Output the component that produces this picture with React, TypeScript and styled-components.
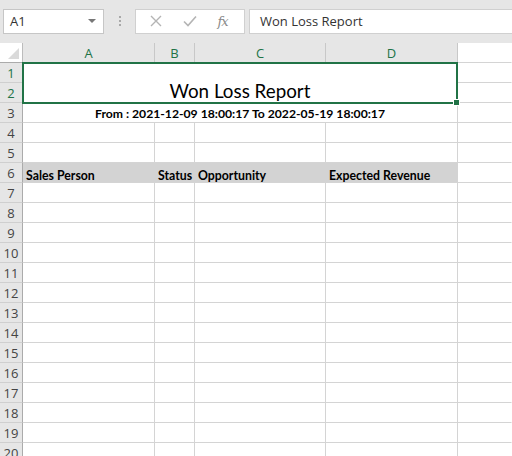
import React from "react";
import styled, { createGlobalStyle } from "styled-components";

const Global = createGlobalStyle`
  html, body { margin: 0; padding: 0; background: #fff; }
  body { width: 512px; height: 456px; overflow: hidden; font-family: "Open Sans", "Noto Sans", sans-serif; }
`;

const Page = styled.div`
  width: 512px;
  height: 456px;
  display: flex;
  flex-direction: column;
  overflow: hidden;
  position: relative;
`;

const Toolbar = styled.div`
  flex-shrink: 0;
  height: 43px;
  box-sizing: border-box;
  background: #e6e6e6;
  display: flex;
  align-items: center;
  padding: 0 0 1px 3px;
`;

const NameBox = styled.div`
  width: 101px;
  height: 25px;
  box-sizing: border-box;
  background: #fff;
  border: 1px solid #c6c6c6;
  display: flex;
  align-items: center;
  justify-content: space-between;
  padding: 0 7px 0 6px;
  font-size: 13px;
  color: #333;
`;

const Caret = styled.span`
  width: 0;
  height: 0;
  border-left: 4px solid transparent;
  border-right: 4px solid transparent;
  border-top: 4px solid #777;
`;

const Grip = styled.div`
  width: 31px;
  display: flex;
  flex-direction: column;
  align-items: center;
  gap: 2px;
  span {
    width: 2px;
    height: 2px;
    background: #a8a8a8;
  }
`;

const FxButtons = styled.div`
  width: 110px;
  height: 25px;
  box-sizing: border-box;
  background: #fff;
  border: 1px solid #d0d0d0;
  display: flex;
  align-items: center;
  justify-content: space-around;
  padding: 0 6px 0 4px;
  color: #b4b4b4;
`;

const Fx = styled.span`
  font-family: "DejaVu Serif", "Liberation Serif", serif;
  font-style: italic;
  font-size: 13px;
  color: #8a8a8a;
  letter-spacing: -1px;
`;

const FormulaInput = styled.div`
  margin-left: 4px;
  flex: 1;
  height: 25px;
  box-sizing: border-box;
  background: #fff;
  border: 1px solid #d0d0d0;
  border-right: none;
  display: flex;
  align-items: center;
  padding-left: 10px;
  font-size: 13px;
  color: #333;
`;

const Sheet = styled.div`
  flex-shrink: 0;
  display: grid;
  grid-template-columns: 23px 132px 40px 131px 132px 1fr;
  grid-auto-rows: 20px;
  position: relative;
`;

const Corner = styled.div`
  background: #fff;
  border-right: 1px solid #bcbcbc;
  border-bottom: 1px solid #ababab;
  box-sizing: border-box;
  position: relative;
  &::after {
    content: "";
    position: absolute;
    right: 3px;
    bottom: 3px;
    width: 0;
    height: 0;
    border-left: 11px solid transparent;
    border-bottom: 11px solid #dadada;
  }
`;

const ColHead = styled.div<{ $selected?: boolean; $blank?: boolean }>`
  box-sizing: border-box;
  background: ${(p) => (p.$blank ? "#fff" : "#e6e6e6")};
  border-right: 1px solid ${(p) => (p.$blank ? "transparent" : "#c8c8c8")};
  border-bottom: 1px solid ${(p) => (p.$blank ? "#d4d4d4" : "#ababab")};
  display: flex;
  align-items: center;
  justify-content: center;
  font-size: 13px;
  color: ${(p) => (p.$selected ? "#217346" : "#444")};
`;

const RowHead = styled.div<{ $selected?: boolean }>`
  grid-column: 1;
  box-sizing: border-box;
  background: #e6e6e6;
  border-right: 1px solid #ababab;
  border-bottom: 1px solid #cfcfcf;
  display: flex;
  align-items: center;
  justify-content: center;
  font-size: 13px;
  color: ${(p) => (p.$selected ? "#217346" : "#444")};
  padding-top: 1px;
`;

const Cell = styled.div<{ $span?: number; $rows?: number; $edge?: boolean }>`
  box-sizing: border-box;
  ${(p) => (p.$span ? `grid-column: span ${p.$span};` : "")}
  ${(p) => (p.$rows ? `grid-row: span ${p.$rows};` : "")}
  border-right: 1px solid ${(p) => (p.$edge ? "transparent" : "#d4d4d4")};
  border-bottom: 1px solid #d4d4d4;
  background: #fff;
  font-family: Lato, "Open Sans", sans-serif;
  font-size: 11px;
  color: #000;
  display: flex;
  align-items: flex-end;
  padding: 0 3px 3px;
  white-space: nowrap;
  overflow: hidden;
`;

const Title = styled(Cell)`
  justify-content: center;
  font-size: 18.8px;
  line-height: 1;
  padding-bottom: 1px;
`;

const Range = styled(Cell)`
  justify-content: center;
  font-weight: bold;
  font-size: 12.2px;
  padding-bottom: 1px;
`;

const HeadCell = styled(Cell)`
  font-weight: bold;
  font-size: 12.3px;
  line-height: 1;
  background: #d3d3d3;
  border-right-color: #d3d3d3;
  padding-bottom: 0;
`;

const Selection = styled.div`
  position: absolute;
  left: 22px;
  top: 19px;
  width: 436px;
  height: 42px;
  box-sizing: border-box;
  border: 2px solid #217346;
  pointer-events: none;
`;

const Handle = styled.div`
  position: absolute;
  right: -4px;
  bottom: -4px;
  width: 5px;
  height: 5px;
  background: #217346;
  border: 1px solid #fff;
`;

const cols = ["A", "B", "C", "D"];

export default function App() {
  const emptyRows = Array.from({ length: 14 }, (_, i) => i + 7);
  return (
    <Page>
      <Global />
      <Toolbar>
        <NameBox>
          A1
          <Caret />
        </NameBox>
        <Grip>
          <span />
          <span />
          <span />
        </Grip>
        <FxButtons>
          <svg width="12" height="12" viewBox="0 0 12 12">
            <path d="M1 1 L11 11 M11 1 L1 11" stroke="#b4b4b4" strokeWidth="1.4" fill="none" />
          </svg>
          <svg width="14" height="12" viewBox="0 0 14 12">
            <path d="M1 6.5 L5 10.5 L13 1.5" stroke="#b4b4b4" strokeWidth="1.6" fill="none" />
          </svg>
          <Fx>fx</Fx>
        </FxButtons>
        <FormulaInput>Won Loss Report</FormulaInput>
      </Toolbar>
      <Sheet>
        <Corner />
        {cols.map((c) => (
          <ColHead key={c} $selected>
            {c}
          </ColHead>
        ))}
        <ColHead $blank />

        <RowHead $selected>1</RowHead>
        <Title $span={4} $rows={2}>Won Loss Report</Title>
        <Cell $edge />
        <RowHead $selected>2</RowHead>
        <Cell $edge />

        <RowHead>3</RowHead>
        <Range $span={4}>From : 2021-12-09 18:00:17 To 2022-05-19 18:00:17</Range>
        <Cell $edge />

        {[4, 5].map((r) => (
          <React.Fragment key={r}>
            <RowHead>{r}</RowHead>
            <Cell />
            <Cell />
            <Cell />
            <Cell />
            <Cell $edge />
          </React.Fragment>
        ))}

        <RowHead>6</RowHead>
        <HeadCell>Sales Person</HeadCell>
        <HeadCell>Status</HeadCell>
        <HeadCell>Opportunity</HeadCell>
        <HeadCell>Expected Revenue</HeadCell>
        <Cell $edge />

        {emptyRows.map((r) => (
          <React.Fragment key={r}>
            <RowHead>{r}</RowHead>
            <Cell />
            <Cell />
            <Cell />
            <Cell />
            <Cell $edge />
          </React.Fragment>
        ))}
        <Selection>
          <Handle />
        </Selection>
      </Sheet>
    </Page>
  );
}
